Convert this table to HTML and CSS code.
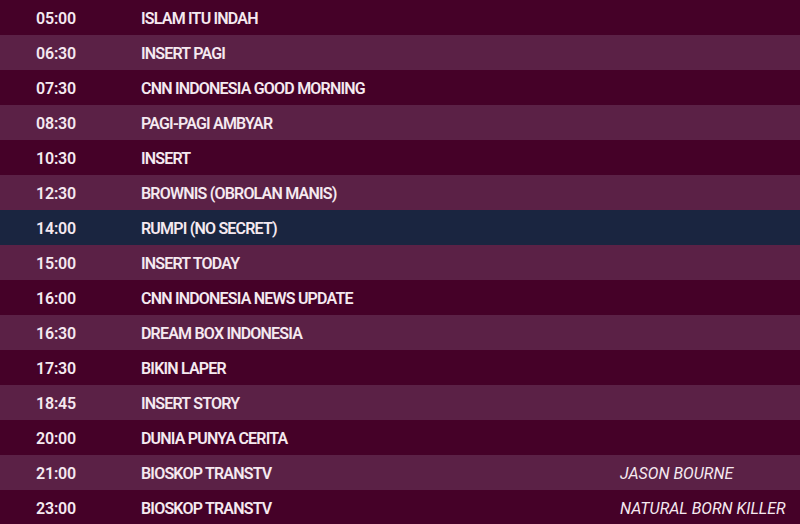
FILE: index.html
```html
<!DOCTYPE html>
<html>
<head>
<meta charset="utf-8">
<link rel="stylesheet" href="styles.css">
</head>
<body>
<div class="schedule">
  <div class="row"><span class="time">05:00</span><span class="title">ISLAM ITU INDAH</span><span class="extra"></span></div>
  <div class="row alt"><span class="time">06:30</span><span class="title">INSERT PAGI</span><span class="extra"></span></div>
  <div class="row"><span class="time">07:30</span><span class="title">CNN INDONESIA GOOD MORNING</span><span class="extra"></span></div>
  <div class="row alt"><span class="time">08:30</span><span class="title">PAGI-PAGI AMBYAR</span><span class="extra"></span></div>
  <div class="row"><span class="time">10:30</span><span class="title">INSERT</span><span class="extra"></span></div>
  <div class="row alt"><span class="time">12:30</span><span class="title">BROWNIS (OBROLAN MANIS)</span><span class="extra"></span></div>
  <div class="row now"><span class="time">14:00</span><span class="title">RUMPI (NO SECRET)</span><span class="extra"></span></div>
  <div class="row alt"><span class="time">15:00</span><span class="title">INSERT TODAY</span><span class="extra"></span></div>
  <div class="row"><span class="time">16:00</span><span class="title">CNN INDONESIA NEWS UPDATE</span><span class="extra"></span></div>
  <div class="row alt"><span class="time">16:30</span><span class="title">DREAM BOX INDONESIA</span><span class="extra"></span></div>
  <div class="row"><span class="time">17:30</span><span class="title">BIKIN LAPER</span><span class="extra"></span></div>
  <div class="row alt"><span class="time">18:45</span><span class="title">INSERT STORY</span><span class="extra"></span></div>
  <div class="row"><span class="time">20:00</span><span class="title">DUNIA PUNYA CERITA</span><span class="extra"></span></div>
  <div class="row alt"><span class="time">21:00</span><span class="title">BIOSKOP TRANSTV</span><span class="extra">JASON BOURNE</span></div>
  <div class="row"><span class="time">23:00</span><span class="title">BIOSKOP TRANSTV</span><span class="extra">NATURAL BORN KILLER</span></div>
</div>
</body>
</html>
```
FILE: styles.css
```css
html, body {
  margin: 0;
  padding: 0;
  background: #450128;
}
body {
  width: 800px;
  height: 524px;
  overflow: hidden;
  font-family: Roboto, "Liberation Sans", sans-serif;
  color: #f5e9f0;
}
.schedule {
  display: flex;
  flex-direction: column;
}
.row {
  display: grid;
  grid-template-columns: 112px 508px 1fr;
  align-items: center;
  height: 35px;
  background: #450128;
}
.row.alt {
  background: #5b2146;
}
.row.now {
  background: #1a2540;
}
.time {
  text-align: center;
  font-size: 16px;
  font-weight: 600;
  letter-spacing: -0.2px;
  padding-top: 2px;
}
.title {
  padding-left: 29px;
  font-size: 16px;
  font-weight: 600;
  letter-spacing: -0.8px;
  padding-top: 2px;
}
.extra {
  font-size: 16px;
  font-style: italic;
  font-weight: 400;
  letter-spacing: 0;
  padding-top: 2px;
}
```
